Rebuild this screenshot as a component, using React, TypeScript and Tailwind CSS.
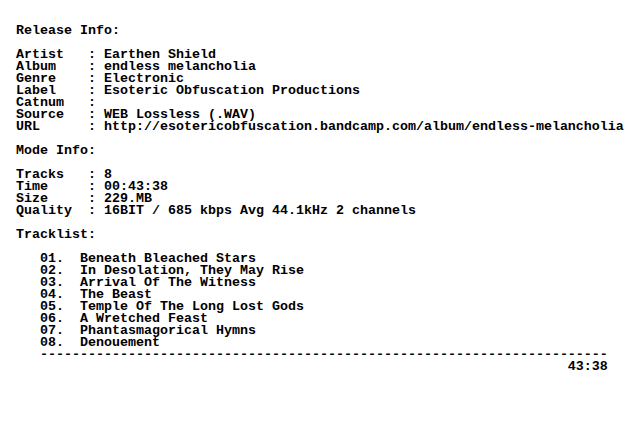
const nfo = [
  "Release Info:",
  "",
  "Artist   : Earthen Shield",
  "Album    : endless melancholia",
  "Genre    : Electronic",
  "Label    : Esoteric Obfuscation Productions",
  "Catnum   :",
  "Source   : WEB Lossless (.WAV)",
  "URL      : http://esotericobfuscation.bandcamp.com/album/endless-melancholia",
  "",
  "Mode Info:",
  "",
  "Tracks   : 8",
  "Time     : 00:43:38",
  "Size     : 229.MB",
  "Quality  : 16BIT / 685 kbps Avg 44.1kHz 2 channels",
  "",
  "Tracklist:",
  "",
  "   01.  Beneath Bleached Stars",
  "   02.  In Desolation, They May Rise",
  "   03.  Arrival Of The Witness",
  "   04.  The Beast",
  "   05.  Temple Of The Long Lost Gods",
  "   06.  A Wretched Feast",
  "   07.  Phantasmagorical Hymns",
  "   08.  Denouement",
  "   " + "-".repeat(71),
  " ".repeat(69) + "43:38",
];

export default function App() {
  return (
    <div className="bg-white min-h-screen w-[632px] h-[444px] overflow-hidden">
      <pre className="pt-[25px] pl-4 m-0 font-['Liberation_Mono',monospace] font-bold text-[13.3333px] leading-[12px] text-black whitespace-pre">
        {nfo.join("\n")}
      </pre>
    </div>
  );
}
